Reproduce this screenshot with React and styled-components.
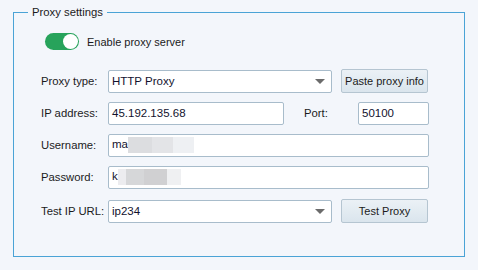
import styled, { createGlobalStyle } from 'styled-components'

const GlobalStyle = createGlobalStyle`
  html, body {
    margin: 0;
    background: #f3f6fb;
  }
  body {
    font-family: 'Liberation Sans', Arial, sans-serif;
    font-size: 11px;
    color: #1b1b1b;
  }
`

const Page = styled.div`
  width: 478px;
  height: 270px;
  padding: 5px 0 0 13px;
  box-sizing: border-box;
`

const Frame = styled.fieldset`
  margin: 0;
  width: 452px;
  box-sizing: border-box;
  border: 1px solid #4aa3d6;
  padding: 0 35px 33px 27px;
`

const Legend = styled.legend`
  padding: 0 4px;
  margin-left: -13px;
  line-height: 14px;
  font-size: 11.3px;
  color: #1b1b1b;
`

const ToggleRow = styled.div`
  display: flex;
  align-items: center;
  gap: 8px;
  margin: 14px 0 19px 4px;
  height: 17px;
  font-size: 11px;
`

const Toggle = styled.div`
  position: relative;
  width: 34px;
  height: 17px;
  border-radius: 9px;
  background: ${p => (p.on ? '#27a35b' : '#b9c1c8')};
`

const Knob = styled.div`
  position: absolute;
  top: 1px;
  left: ${p => (p.on ? '18px' : '1px')};
  width: 15px;
  height: 15px;
  border-radius: 50%;
  background: #ffffff;
`

const Rows = styled.div`
  display: flex;
  flex-direction: column;
  gap: 8px;
`

const Row = styled.div`
  display: flex;
  align-items: center;
  height: 24px;
  margin-top: ${p => p.push || 0}px;
`

const Label = styled.div`
  width: ${p => p.w || 67}px;
  margin-left: ${p => p.ml || 0}px;
  flex-shrink: 0;
  white-space: nowrap;
  font-size: 11.3px;
`

const Box = styled.div`
  width: ${p => p.w}px;
  height: 23px;
  box-sizing: border-box;
  border: 1px solid #a8bccb;
  border-radius: 2px;
  background: #ffffff;
  display: flex;
  align-items: center;
  padding: 0 0 0 3px;
  color: #12122e;
  flex-shrink: 0;
  font-size: 11.5px;
`

const Value = styled.span`
  flex: 1;
  white-space: nowrap;
`

const Arrow = styled.span`
  width: 0;
  height: 0;
  border-left: 5px solid transparent;
  border-right: 5px solid transparent;
  border-top: 5px solid #6b6b6b;
  margin-right: 6px;
`

const Blur = styled.span`
  display: inline-block;
  vertical-align: middle;
  height: 16px;
  width: ${p => p.w}px;
  background: ${p => p.bg};
`

const Button = styled.button`
  margin-left: 9px;
  width: 87px;
  height: 24px;
  box-sizing: border-box;
  border: 1px solid #b5c5d1;
  border-radius: 2px;
  background: linear-gradient(#ebf1f6, #dae5ed);
  font-family: 'Liberation Sans', Arial, sans-serif;
  font-size: 11px;
  color: #1b1b1b;
  padding: 0;
  white-space: nowrap;
`

function App() {
  return (
    <Page>
      <GlobalStyle />
      <Frame>
        <Legend>Proxy settings</Legend>
        <ToggleRow>
          <Toggle on>
            <Knob on />
          </Toggle>
          <span>Enable proxy server</span>
        </ToggleRow>
        <Rows>
          <Row>
            <Label>Proxy type:</Label>
            <Box w={224}>
              <Value>HTTP Proxy</Value>
              <Arrow />
            </Box>
            <Button>Paste proxy info</Button>
          </Row>
          <Row>
            <Label>IP address:</Label>
            <Box w={176}><Value>45.192.135.68</Value></Box>
            <Label ml={20} w={54}>Port:</Label>
            <Box w={71}><Value>50100</Value></Box>
          </Row>
          <Row>
            <Label>Username:</Label>
            <Box w={321}>
              <Value>
                ma
                <Blur w={66} bg="linear-gradient(90deg, #dcdde0 0 24px, #e3e4e7 24px 45px, #eef0f3 45px)" />
              </Value>
            </Box>
          </Row>
          <Row>
            <Label>Password:</Label>
            <Box w={321}>
              <Value>
                k
                <Blur w={63} bg="linear-gradient(90deg, #ececef 0 8px, #d6d7d9 8px 26px, #d0d0d2 26px 49px, #eff0f2 49px)" />
              </Value>
            </Box>
          </Row>
          <Row push={2}>
            <Label>Test IP URL:</Label>
            <Box w={224}>
              <Value>ip234</Value>
              <Arrow />
            </Box>
            <Button>Test Proxy</Button>
          </Row>
        </Rows>
      </Frame>
    </Page>
  )
}

export default App
